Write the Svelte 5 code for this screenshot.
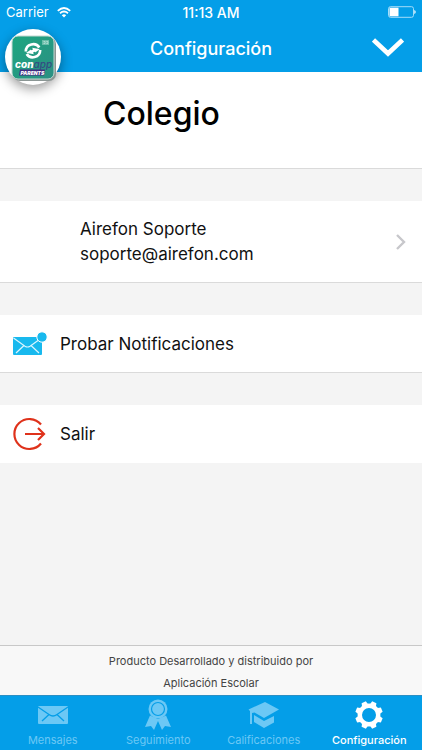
<script>
  const teeth = [22.5, 67.5, 112.5, 157.5, 202.5, 247.5, 292.5, 337.5];
  const tabs = [
    { id: 'mensajes', label: 'Mensajes' },
    { id: 'seguimiento', label: 'Seguimiento' },
    { id: 'calificaciones', label: 'Calificaciones' },
    { id: 'configuracion', label: 'Configuración' },
  ];
  let active = $state('configuracion');
</script>

<div class="app">
  <header>
    <div class="status">
      <span class="carrier">
        Carrier
        <svg width="14" height="11" viewBox="0 0 14 11" aria-hidden="true">
          <g fill="none" stroke="#fff" stroke-width="1.8">
            <path d="M.8 3.8Q7-1.8 13.2 3.8" />
            <path d="M3 6.2Q7 2.7 11 6.2" />
          </g>
          <path d="M4.8 8.2Q7 6.3 9.2 8.2L7 10.6Z" fill="#fff" />
        </svg>
      </span>
      <time>11:13 AM</time>
      <svg class="battery" width="28" height="12" viewBox="0 0 28 12" aria-hidden="true">
        <rect x=".5" y=".7" width="25" height="10.6" rx="2" fill="none" stroke="#a5dcf8" />
        <path d="M1.5 1.7h9v8.6h-9z" fill="#fff" />
        <path d="M26.2 4q1.6.4 1.6 2t-1.6 2z" fill="#d5effc" />
      </svg>
    </div>
    <div class="nav">
      <h1>Configuración</h1>
      <button class="toggle" aria-label="Desplegar">
        <svg width="32" height="20" viewBox="0 0 32 20">
          <path d="M1.500 2L16 15.500L30.500 2" fill="none" stroke="#fff" stroke-width="4.600" />
        </svg>
      </button>
    </div>
    <div class="logo">
      <svg width="56" height="56" viewBox="0 0 56 56" role="img" aria-label="Conapp Parents">
        <defs>
          <linearGradient id="green" x1="0" y1="0" x2="1" y2="1">
            <stop offset="0" stop-color="#1da680" />
            <stop offset="1" stop-color="#2c8f83" />
          </linearGradient>
        </defs>
        <rect x="8" y="8" width="43" height="44" rx="7" fill="#8b9694" />
        <rect x="7" y="7" width="42" height="43" rx="6" fill="url(#green)" stroke="#c3d8d2" />
        <rect x="37" y="11" width="7" height="5" fill="#69bda9" />
        <path d="M38.500 12.500h1.600v2h-1.600m2.800-2h1.600v2h-1.600" fill="none" stroke="#d0eee5" stroke-width=".6" />
        <g fill="none" stroke="#fff" stroke-width="2.600">
          <path d="M20.800 22.500C20.800 14.500 31 13 34.300 18.500" />
          <path d="M35.200 21C35.200 29 25 30.500 21.700 25" />
        </g>
        <g fill="#fff">
          <path d="M21 23.500l7-3-.8-1.800 6.800 1.300-3.500 3.500-.7-1.500-6 2.300z" />
          <path d="M35 20.500l-7 3 .8 1.800-6.800-1.300 3.500-3.500.7 1.500 6-2.300z" />
        </g>
        <text x="10" y="38.500" font-size="10" font-weight="800" font-style="italic" fill="#fff">con<tspan font-weight="500" fill="#344b83">app</tspan></text>
        <path d="M15 40.500h25l-1 6H14z" fill="#422c82" />
        <text x="15.500" y="45.500" font-size="5" font-weight="900" font-style="italic" fill="#fff">PARENTS</text>
      </svg>
    </div>
  </header>

  <main>
    <section class="school"><h2>Colegio</h2></section>

    <a class="profile" href="#perfil">
      <span>Airefon Soporte<br />soporte@airefon.com</span>
      <svg width="12" height="18" viewBox="0 0 12 18" aria-hidden="true">
        <path d="M2 2l7 7-7 7" fill="none" stroke="#c7c7cb" stroke-width="2.400" />
      </svg>
    </a>

    <button class="row lined">
      <svg width="36" height="28" viewBox="0 0 36 28" aria-hidden="true">
        <rect x="1" y="7" width="29" height="18" rx="1" fill="#18b9ee" />
        <path d="M1.500 8l11.500 8.200q2.500 1.600 5 0L29.500 8M4 23l8-7.500M27 23l-8-7.500" fill="none" stroke="#d9f5ff" stroke-width="1.200" />
        <circle cx="30" cy="7" r="5.200" fill="#18b9ee" stroke="#fff" stroke-width="1" />
      </svg>
      Probar Notificaciones
    </button>

    <button class="row">
      <svg width="36" height="34" viewBox="0 0 36 34" aria-hidden="true">
        <g fill="none" stroke="#df321b" stroke-width="2.200">
          <path d="M29 7.500A15 15 0 1 0 29 26.500" />
          <path d="M13 17h19M26 11l6 6-6 6" />
        </g>
      </svg>
      Salir
    </button>
  </main>

  <footer>Producto Desarrollado y distribuido por<br />Aplicación Escolar</footer>

  <nav class="tabs">
    {#each tabs as tab (tab.id)}
      <button class:active={active === tab.id} onclick={() => (active = tab.id)}>
        <svg width="32" height="34" viewBox="0 0 32 34" aria-hidden="true">
          {#if tab.id === 'mensajes'}
            <rect x="1" y="8" width="30" height="18" rx="1" fill="currentColor" />
            <path d="M1 9l11 7.500q4 3 8 0L31 9M5 23l7-6.500M27 23l-7-6.500" fill="none" stroke="#049ee8" stroke-width="1.300" />
          {:else if tab.id === 'seguimiento'}
            <path d="M8 17.500L3 29l6-1 3 4 4-9 4 9 3-4 6 1-5-11.500-8 3.500z" fill="currentColor" />
            <circle cx="16" cy="11" r="9.500" fill="currentColor" />
            <circle cx="16" cy="11" r="6.500" fill="none" stroke="#049ee8" stroke-width="1.200" />
          {:else if tab.id === 'calificaciones'}
            <path d="M.5 11.500L17 4l14 7.500-15 8.500-9.500-5.500-2.500.5v11H2V13z" fill="currentColor" />
            <path d="M6 17l10 6L26 18v6.500L16 30 6 24z" fill="currentColor" />
          {:else}
            <circle cx="16" cy="17" r="9.200" fill="none" stroke="currentColor" stroke-width="4.400" />
            {#each teeth as angle}
              <path d="M12.500 8l1.200-4.800h4.600L19.500 8z" fill="currentColor" transform="rotate({angle} 16 17)" />
            {/each}
          {/if}
        </svg>
        <span>{tab.label}</span>
      </button>
    {/each}
  </nav>
</div>

<style>
  :global(body) {
    margin: 0;
  }
  .app {
    display: flex;
    flex-direction: column;
    min-height: 100vh;
    background: #f4f4f4;
    color: #111;
    font-family: Inter, Roboto, sans-serif;
    font-size: 17px;
  }
  button {
    border: 0;
    padding: 0;
    background: none;
    color: inherit;
    font: inherit;
    cursor: pointer;
  }
  h1,
  h2 {
    margin: 0;
  }
  svg {
    flex: none;
    display: block;
  }
  header {
    position: relative;
    background: #049ee8;
    color: #fff;
  }
  .status {
    display: grid;
    grid-template-columns: 1fr auto 1fr;
    align-items: center;
    height: 24px;
    padding: 0 6px;
    font-size: 13px;
  }
  .carrier {
    display: flex;
    align-items: center;
    gap: 8px;
  }
  time {
    font-size: 14px;
    font-weight: 500;
  }
  .battery {
    justify-self: end;
  }
  .nav {
    display: grid;
    grid-template-columns: 1fr auto 1fr;
    align-items: center;
    height: 48px;
    padding: 0 18px;
  }
  h1 {
    grid-column: 2;
    font-size: 18px;
    font-weight: 500;
  }
  .toggle {
    justify-self: end;
  }
  .logo {
    position: absolute;
    top: 29px;
    left: 5px;
    border-radius: 50%;
    background: #fff;
    box-shadow: 0 4px 12px rgba(0, 0, 0, 0.4);
  }
  main {
    flex: 1;
    display: flex;
    flex-direction: column;
    gap: 32px;
  }
  .school,
  .profile,
  .row {
    background: #fff;
  }
  .school,
  .profile,
  .lined {
    border-bottom: 1px solid #dadada;
  }
  .school {
    padding: 20px 103px 32px;
  }
  h2 {
    color: #000;
    font-size: 32px;
    font-weight: 500;
    line-height: 44px;
  }
  .profile {
    display: flex;
    align-items: center;
    justify-content: space-between;
    padding: 16px 15px 15px 80px;
    color: inherit;
    line-height: 25px;
    text-decoration: none;
  }
  .row {
    display: flex;
    align-items: center;
    gap: 12px;
    height: 58px;
    padding: 0 12px;
    box-sizing: border-box;
    text-align: left;
  }
  footer {
    padding: 4px 0 1px;
    border-top: 1px solid #c8c8c8;
    background: #f8f8f8;
    color: #444;
    font-size: 11px;
    line-height: 22px;
    text-align: center;
  }
  .tabs {
    display: flex;
    background: #049ee8;
    border-top: 1px solid #2b8fc4;
    color: #6cc8f5;
    font-size: 11px;
  }
  .tabs button {
    flex: 1;
    display: flex;
    flex-direction: column;
    align-items: center;
    height: 54px;
    padding-top: 2px;
    line-height: 16px;
    box-sizing: border-box;
  }
  .tabs .active {
    color: #fff;
    font-weight: 500;
  }
</style>
